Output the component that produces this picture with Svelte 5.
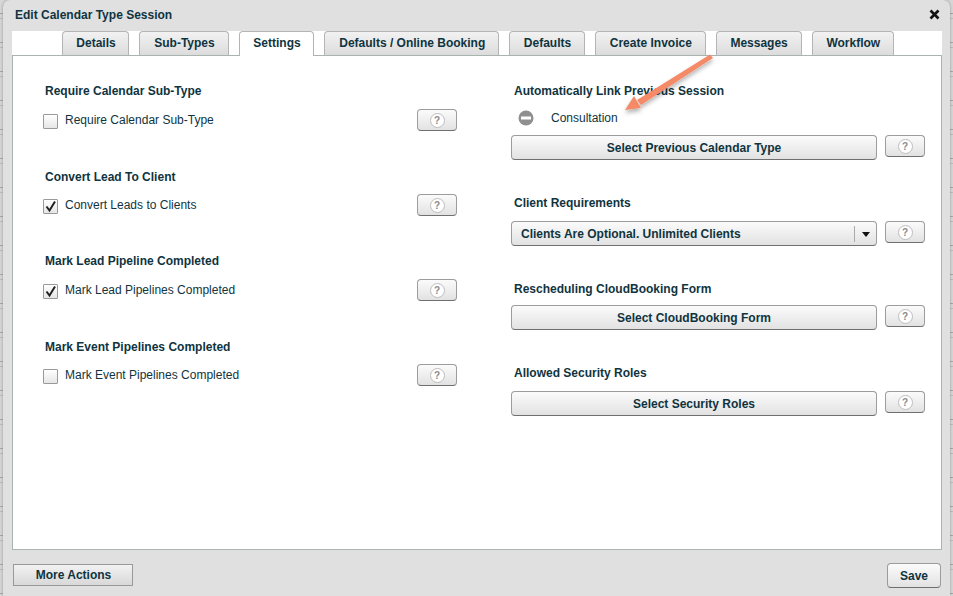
<script>
  const tabs = [
    "Details",
    "Sub-Types",
    "Settings",
    "Defaults / Online Booking",
    "Defaults",
    "Create Invoice",
    "Messages",
    "Workflow",
  ];
  const activeTab = "Settings";

  const options = [
    { title: "Require Calendar Sub-Type", label: "Require Calendar Sub-Type", checked: false },
    { title: "Convert Lead To Client", label: "Convert Leads to Clients", checked: true },
    { title: "Mark Lead Pipeline Completed", label: "Mark Lead Pipelines Completed", checked: true },
    { title: "Mark Event Pipelines Completed", label: "Mark Event Pipelines Completed", checked: false },
  ];
</script>

{#snippet help()}
  <button class="help"><span>?</span></button>
{/snippet}

<div class="page">
  <div class="dialog">
    <header>
      <h1>Edit Calendar Type Session</h1>
      <svg class="close" width="11" height="11" viewBox="0 0 11 11">
        <path d="M1.5 1.5 L9.5 9.5 M9.5 1.5 L1.5 9.5" stroke="#111" stroke-width="2.6" />
      </svg>
    </header>

    <nav>
      {#each tabs as tab}
        <div class="tab" class:active={tab === activeTab}>{tab}</div>
      {/each}
    </nav>

    <main>
      <div class="left">
        {#each options as opt, i}
          <section class:low={i % 2 === 1}>
            <h2>{opt.title}</h2>
            <div class="check-row">
              <span class="box">
                {#if opt.checked}
                  <svg width="13" height="13" viewBox="0 0 13 13">
                    <path d="M2.5 6.5 L5.5 10.5 L11 1.5" fill="none" stroke="#222" stroke-width="2" />
                  </svg>
                {/if}
              </span>
              <label>{opt.label}</label>
              {@render help()}
            </div>
          </section>
        {/each}
      </div>

      <div class="right">
        <section class="link">
          <h2>Automatically Link Previous Session</h2>
          <div class="linked">
            <svg width="16" height="16" viewBox="0 0 16 16">
              <circle cx="8" cy="8" r="7.5" fill="#8f8f8f" />
              <rect x="3" y="6.5" width="10" height="3" fill="#fff" />
            </svg>
            <span>Consultation</span>
          </div>
          <div class="btn-row">
            <button class="wide">Select Previous Calendar Type</button>
            {@render help()}
          </div>
        </section>

        <section class="clients">
          <h2>Client Requirements</h2>
          <div class="btn-row">
            <button class="wide select">
              <span class="value">Clients Are Optional. Unlimited Clients</span>
              <span class="caret"></span>
            </button>
            {@render help()}
          </div>
        </section>

        <section class="form">
          <h2>Rescheduling CloudBooking Form</h2>
          <div class="btn-row">
            <button class="wide">Select CloudBooking Form</button>
            {@render help()}
          </div>
        </section>

        <section class="roles">
          <h2>Allowed Security Roles</h2>
          <div class="btn-row">
            <button class="wide">Select Security Roles</button>
            {@render help()}
          </div>
        </section>
      </div>
    </main>

    <footer>
      <button class="more">More Actions</button>
      <button class="save">Save</button>
    </footer>

    <svg class="arrow" width="110" height="80" viewBox="0 0 110 80">
      <defs>
        <filter id="arrow-shadow" x="-20%" y="-20%" width="140%" height="150%">
          <feDropShadow dx="0" dy="3" stdDeviation="2" flood-color="#000" flood-opacity="0.3" />
        </filter>
      </defs>
      <g filter="url(#arrow-shadow)" fill="#f58a68">
        <path d="M90 2.5 L93 6 L21 53 L17 48 Z" />
        <path d="M5 58 L14 44 L21 56 Z" />
      </g>
    </svg>
  </div>
</div>

<style>
  :global(body) {
    margin: 0;
    background: #ececec;
  }
  .page {
    width: 953px;
    height: 596px;
    overflow: hidden;
    padding-left: 3px;
    box-sizing: border-box;
    font-family: "Liberation Sans", Arial, sans-serif;
    font-size: 12px;
    color: #0f3440;
    background: repeating-linear-gradient(
      #d6d6d6 0 13px,
      #a8a8a8 13px 14px,
      #d6d6d6 14px 18px,
      #bdbdbd 18px 19px,
      #d6d6d6 19px 29px
    );
  }
  .dialog {
    position: relative;
    width: 947px;
    height: 596px;
    background: #e0e0e0;
    border-radius: 7px 7px 0 0;
    box-shadow: 0 0 3px rgba(0, 0, 0, 0.3);
    box-sizing: border-box;
    padding: 0 8px 0 9px;
  }
  header {
    height: 31px;
    display: flex;
    justify-content: space-between;
    align-items: center;
    padding: 0 2px 1px 3px;
    box-sizing: border-box;
  }
  h1 {
    margin: 0;
    font-size: 12px;
    font-weight: bold;
  }
  .close {
    margin-top: -2px;
  }
  nav {
    height: 24px;
    background: #fff;
    display: flex;
    gap: 10px;
    padding-left: 49.5px;
  }
  .tab {
    height: 24px;
    padding: 0 12.8px 0 13.8px;
    box-sizing: border-box;
    line-height: 23px;
    font-weight: bold;
    border: 1px solid #b4b4b4;
    border-bottom: none;
    border-radius: 4px 4px 0 0;
    background: linear-gradient(#f2f2f2, #dcdcdc);
    position: relative;
  }
  .tab.active {
    background: #fff;
    height: 25px;
    z-index: 1;
  }
  main {
    height: 495px;
    box-sizing: border-box;
    background: #fff;
    border: 1px solid #a9b3b0;
    display: grid;
    grid-template-columns: 468px 1fr;
    padding-top: 27px;
  }
  h2 {
    margin: 0;
    font-size: 12px;
    line-height: 16px;
    font-weight: bold;
  }
  .left {
    padding: 0 0 0 30px;
  }
  .left section {
    height: 85px;
    box-sizing: border-box;
    padding-left: 2px;
  }
  .left section.low {
    padding-top: 1px;
  }
  .left section.low .check-row {
    margin-top: 9px;
  }
  .check-row {
    display: flex;
    align-items: center;
    height: 22px;
    margin-top: 10px;
  }
  .box {
    width: 13px;
    height: 13px;
    margin-left: -2px;
    margin-top: 3px;
    border: 1px solid #9a9a9a;
    border-radius: 1px;
    background: linear-gradient(#fff, #e6e6e6);
    flex: none;
    display: block;
  }
  .box svg {
    display: block;
  }
  label {
    margin-left: 7px;
    margin-top: -1px;
    width: 352px;
  }
  button {
    font-family: inherit;
    font-size: 12px;
    font-weight: bold;
    color: inherit;
    padding: 0;
    box-sizing: border-box;
    background: linear-gradient(#fbfbfb, #e2e2e2);
    border: 1px solid #9c9c9c;
    border-bottom-color: #6f6f6f;
    border-radius: 4px;
  }
  .help {
    width: 40px;
    height: 22px;
    flex: none;
    display: flex;
    align-items: center;
    justify-content: center;
  }
  .help span {
    width: 13px;
    height: 13px;
    border: 1px solid #bdbdbd;
    border-radius: 50%;
    background: #fff;
    color: #8a8a8a;
    font-size: 10px;
    line-height: 13px;
    text-align: center;
  }
  .right {
    padding-left: 30px;
  }
  .right h2 {
    padding-left: 3px;
  }
  .linked {
    display: flex;
    align-items: center;
    height: 20px;
    margin: 9px 0 0 7px;
  }
  .linked span {
    margin-left: 17px;
  }
  .btn-row {
    display: flex;
    align-items: flex-start;
    gap: 8px;
  }
  .link .btn-row {
    margin-top: 7px;
  }
  .wide {
    width: 366px;
    height: 25px;
  }
  .select {
    display: flex;
    align-items: center;
    padding-left: 9px;
  }
  .select .value {
    flex: 1;
    text-align: left;
  }
  .caret {
    width: 21px;
    height: 16px;
    border-left: 1px solid #aaa;
    position: relative;
  }
  .caret::after {
    content: "";
    position: absolute;
    left: 7px;
    top: 6px;
    border: 4px solid transparent;
    border-top: 5px solid #111;
    border-bottom: 0;
  }
  .clients,
  .form,
  .roles {
    margin-top: 35px;
  }
  .clients .btn-row,
  .roles .btn-row {
    margin-top: 10px;
  }
  .form .btn-row {
    margin-top: 8px;
  }
  footer {
    display: flex;
    justify-content: space-between;
    align-items: flex-start;
    padding: 14px 0 0 1px;
  }
  .more {
    width: 120px;
    height: 22px;
    padding-left: 1px;
    border: 1px solid #999;
    border-radius: 0;
    background: linear-gradient(#f2f2f2, #d8d8d8);
  }
  .save {
    width: 54px;
    height: 25px;
    margin: -1px 1px 0 0;
  }
  .arrow {
    position: absolute;
    left: 617px;
    top: 52px;
  }
</style>
